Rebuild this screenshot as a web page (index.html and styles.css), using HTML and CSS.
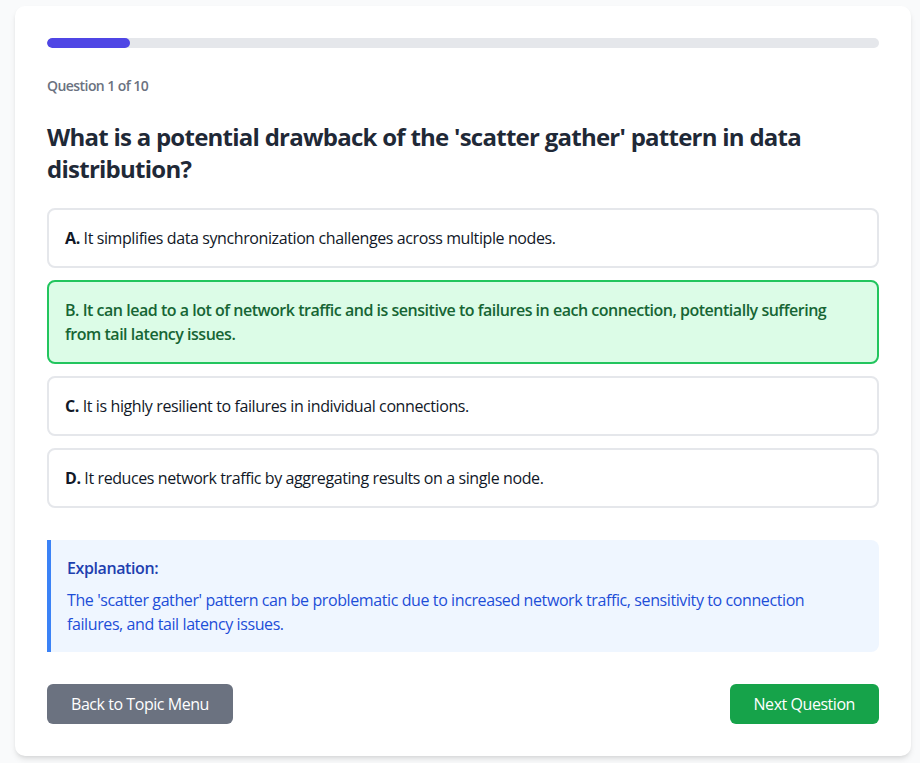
FILE: index.html
```html
<!DOCTYPE html>
<html lang="en">
<head>
<meta charset="utf-8">
<title>Quiz</title>
<link rel="stylesheet" href="styles.css">
</head>
<body>
<main class="card">
  <div class="progress"><div class="progress-fill" style="width: 10%"></div></div>
  <p class="counter">Question 1 of 10</p>
  <h1 class="question">What is a potential drawback of the 'scatter gather' pattern in data distribution?</h1>
  <div class="options">
    <div class="option"><span class="letter">A.</span> It simplifies data synchronization challenges across multiple nodes.</div>
    <div class="option option-correct">B. It can lead to a lot of network traffic and is sensitive to failures in each connection, potentially suffering from tail latency issues.</div>
    <div class="option"><span class="letter">C.</span> It is highly resilient to failures in individual connections.</div>
    <div class="option"><span class="letter">D.</span> It reduces network traffic by aggregating results on a single node.</div>
  </div>
  <section class="explanation">
    <h2 class="explanation-title">Explanation:</h2>
    <p class="explanation-text">The 'scatter gather' pattern can be problematic due to increased network traffic, sensitivity to connection failures, and tail latency issues.</p>
  </section>
  <div class="actions">
    <button class="btn btn-back">Back to Topic Menu</button>
    <button class="btn btn-next">Next Question</button>
  </div>
</main>
</body>
</html>
```

FILE: styles.css
```css
* { box-sizing: border-box; }
html, body { margin: 0; padding: 0; }
body {
  background: #f9fafb;
  font-family: "Open Sans", "Noto Sans", sans-serif;
  color: #1f2937;
  width: 920px;
  height: 763px;
  overflow: hidden;
  letter-spacing: -0.025em;
}
.card {
  width: 896px;
  margin: 6px 0 0 15px;
  background: #ffffff;
  border-radius: 10px;
  box-shadow: 0 4px 6px -1px rgba(0,0,0,0.1), 0 2px 4px -2px rgba(0,0,0,0.1);
  padding: 32px;
}
.progress {
  height: 10px;
  background: #e5e7eb;
  border-radius: 9999px;
  overflow: hidden;
}
.progress-fill {
  height: 100%;
  background: #4f46e5;
  border-radius: 9999px;
}
.counter {
  margin: 28px 0 0;
  font-size: 14px;
  line-height: 20px;
  font-weight: 600;
  color: #6b7280;
  letter-spacing: -0.04em;
}
.question {
  margin: 25px 0 23px;
  font-size: 24px;
  line-height: 32px;
  font-weight: 700;
  color: #1f2937;
  letter-spacing: -0.031em;
}
.options {
  display: flex;
  flex-direction: column;
  gap: 12px;
}
.option {
  border: 2px solid #e5e7eb;
  border-radius: 8px;
  padding: 16px;
  font-size: 16px;
  line-height: 24px;
  color: #111827;
  background: #fff;
}
.letter { font-weight: 700; }
.option-correct {
  background: #dcfce7;
  border-color: #22c55e;
  color: #166534;
  font-weight: 600;
  letter-spacing: -0.03em;
}
.explanation {
  margin-top: 32px;
  background: #eff6ff;
  border-left: 4px solid #3b82f6;
  border-radius: 0 8px 8px 0;
  padding: 16px;
}
.explanation-title {
  margin: 0 0 8px;
  font-size: 16px;
  line-height: 24px;
  font-weight: 600;
  color: #1e40af;
}
.explanation-text {
  margin: 0;
  font-size: 16px;
  line-height: 24px;
  color: #1d4ed8;
}
.actions {
  margin-top: 32px;
  display: flex;
  justify-content: space-between;
}
.btn {
  font-family: inherit;
  font-size: 16px;
  line-height: 24px;
  letter-spacing: -0.028em;
  border: none;
  border-radius: 6px;
  padding: 8px 24px;
  color: #ffffff;
  cursor: pointer;
}
.btn-back { background: #6b7280; }
.btn-next { background: #16a34a; }
```
